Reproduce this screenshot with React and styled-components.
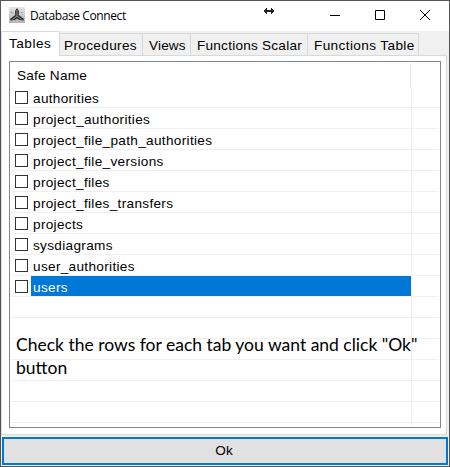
import React from "react";
import styled, { createGlobalStyle } from "styled-components";

const GlobalStyle = createGlobalStyle`
  * { box-sizing: border-box; }
  body { margin: 0; background: #fff; }
`;

const Window = styled.div`
  width: 450px;
  height: 467px;
  display: flex;
  flex-direction: column;
  border: 1px solid #555557;
  background: #f0f0f0;
  color: #000;
  font: 13.6px/16px "Liberation Sans", Arial, sans-serif;
  white-space: nowrap;
  overflow: hidden;
`;

const TitleBar = styled.header`
  height: 30px;
  flex: none;
  display: flex;
  background: #fff;
  padding-left: 8px;
`;

const AppIcon = styled.svg`
  width: 16px;
  height: 16px;
  margin-top: 6px;
`;

const Title = styled.h1`
  margin: 6px 0 0 5px;
  width: 234px;
  font: 400 12px/17px "Open Sans", "Noto Sans", sans-serif;
  letter-spacing: -0.4px;
`;

const ResizeCursor = styled.svg`
  width: 10px;
  height: 8px;
  margin-top: 6px;
`;

const Controls = styled.div`
  display: flex;
  gap: 35px;
  margin: 9px 0 0 56px;

  svg {
    width: 10px;
    height: 10px;
  }
`;

const TabStrip = styled.nav`
  height: 24px;
  flex: none;
  display: flex;
  align-items: flex-end;
  position: relative;
  z-index: 1;
`;

const Tab = styled.button`
  width: ${(p) => p.$width}px;
  height: ${(p) => (p.$active ? 25 : 22)}px;
  margin-bottom: ${(p) => (p.$active ? -1 : 0)}px;
  flex: none;
  border: 1px solid #d9d9d9;
  border-bottom: 0;
  border-left-width: ${(p) => (p.$active ? 1 : 0)}px;
  background: ${(p) => (p.$active ? "#fff" : "#f0f0f0")};
  padding: 4px 0 0;
  padding-left: ${(p) => p.$inset}px;
  font: inherit;
  color: inherit;
  text-align: left;
  display: flex;
  letter-spacing: ${(p) => p.$tracking}px;
`;

const Pane = styled.main`
  width: 446px;
  height: 380px;
  flex: none;
  border: 1px solid #d9d9d9;
  background: #fff;
  padding: 5px 0 0 7px;
`;

const ListView = styled.section`
  width: 432px;
  height: 367px;
  border: 1px solid #828790;
  padding: 1px;
  position: relative;
`;

const ColumnHeader = styled.div`
  width: 400px;
  height: 24px;
  border-right: 1px solid #e5e5e5;
  padding: 5px 0 0 6px;
  letter-spacing: 0.22px;
`;

const Rows = styled.div`
  height: 339px;
  width: 428px;
  background: linear-gradient(#f0f0f0, #f0f0f0) 400px 0 / 1px 100% no-repeat;
`;

const Row = styled.div`
  height: 21px;
  border-bottom: 1px solid #f0f0f0;
  display: flex;
`;

const Checkbox = styled.span`
  width: 13px;
  height: 13px;
  margin: 4px 3px 0 4px;
  border: 1px solid #333;
  background: #fff;
`;

const Label = styled.span`
  width: 380px;
  height: 20px;
  padding: 4px 0 0 2px;
  background: ${(p) => (p.$selected ? "#0078d7" : "transparent")};
  color: ${(p) => (p.$selected ? "#fff" : "inherit")};
  letter-spacing: 0.32px;
`;

const Note = styled.p`
  position: absolute;
  left: 6px;
  top: 271px;
  margin: 0;
  font: 17.5px/23px Lato, Carlito, Calibri, sans-serif;
`;

const OkButton = styled.button`
  width: 446px;
  height: 28px;
  flex: none;
  margin: 2px 0 0 1px;
  border: 2px solid #0078d7;
  background: #e1e1e1;
  padding: 0 2px 0 0;
  font: inherit;
  color: inherit;
`;

const tabs = [
  { name: "Tables", width: 59, inset: 7, tracking: 0.5, active: true },
  { name: "Procedures", width: 83, inset: 4, tracking: 0.35 },
  { name: "Views", width: 48, inset: 6, tracking: 0.15 },
  { name: "Functions Scalar", width: 117, inset: 6, tracking: 0.23 },
  { name: "Functions Table", width: 111, inset: 6, tracking: 0.38 },
];

const tables = [
  "authorities",
  "project_authorities",
  "project_file_path_authorities",
  "project_file_versions",
  "project_files",
  "project_files_transfers",
  "projects",
  "sysdiagrams",
  "user_authorities",
  "users",
];

const emptyRows = [0, 1, 2, 3, 4, 5];

export default function App() {
  return (
    <>
      <GlobalStyle />
      <Window>
        <TitleBar>
          <AppIcon viewBox="0 0 16 16">
            <defs>
              <linearGradient id="iconShade" x2="0" y2="1">
                <stop stopColor="#e4e4e4" />
                <stop offset="1" stopColor="#b4b4b4" />
              </linearGradient>
            </defs>
            <path fill="url(#iconShade)" d="M0 0h16v16H0z" />
            <path fill="#333" d="M8 1L10 4 9.8 8 15 12 14.5 13.5 10 13 8 11.5 6 13 1.5 13.5 1 12 6.2 8 6 4z" />
            <path fill="none" stroke="#aaa" strokeWidth=".8" d="M8 3v6L3.5 12.5M8 9l4.5 3.5" />
            <path fill="none" stroke="#888" strokeWidth=".7" d="M2.5 4v2h2M11.5 5.5h2" />
          </AppIcon>
          <Title>Database Connect</Title>
          <ResizeCursor viewBox="0 0 10 8" shapeRendering="crispEdges">
            <path fill="#222" d="M0 3h1V2h1V1h1v2h4V1h1v1h1v1h1v2H9v1H8v1H7V5H3v2H2V6H1V5H0z" />
          </ResizeCursor>
          <Controls>
            <svg viewBox="0 0 10 10"><path fill="#000" d="M0 5h10v1H0z" /></svg>
            <svg viewBox="0 0 10 10"><path fill="none" stroke="#000" d="M.5.5h9v9h-9z" /></svg>
            <svg viewBox="0 0 10 10"><path fill="none" stroke="#000" d="M0 0l10 10M10 0L0 10" /></svg>
          </Controls>
        </TitleBar>
        <TabStrip>
          {tabs.map((t) => (
            <Tab key={t.name} $width={t.width} $active={t.active} $inset={t.inset} $tracking={t.tracking}>
              {t.name}
            </Tab>
          ))}
        </TabStrip>
        <Pane>
          <ListView>
            <ColumnHeader>Safe Name</ColumnHeader>
            <Rows>
              {tables.map((name) => (
                <Row key={name}>
                  <Checkbox />
                  <Label $selected={name === "users"}>{name}</Label>
                </Row>
              ))}
              {emptyRows.map((n) => <Row key={n} />)}
            </Rows>
            <Note>
              Check the rows for each tab you want and click "Ok"
              <br />
              button
            </Note>
          </ListView>
        </Pane>
        <OkButton>Ok</OkButton>
      </Window>
    </>
  );
}
